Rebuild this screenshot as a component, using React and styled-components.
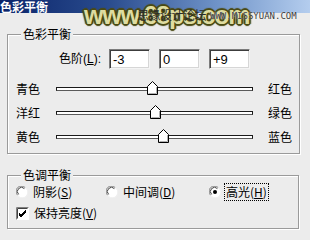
import React from "react";
import styled, { createGlobalStyle } from "styled-components";

const Global = createGlobalStyle`
  html, body { margin: 0; padding: 0; background: #ececec; }
  body { font-family: "Liberation Sans", "Noto Sans CJK SC", sans-serif; font-size: 12px; color: #000; }
`;

const Window = styled.div`
  position: relative;
  width: 310px;
  height: 240px;
  overflow: hidden;
  background: #ececec;
`;

const TitleBar = styled.div`
  height: 13px;
  background: linear-gradient(to right, #0a246a 0%, #2a4c8e 35%, #6f93c8 70%, #b4cdee 100%);
  display: flex;
  align-items: center;
`;

const TitleText = styled.span`
  color: #fff;
  font-weight: bold;
  font-size: 12px;
  line-height: 13px;
  font-family: "Noto Sans CJK SC", sans-serif;
`;

const Watermark = styled.div`
  position: absolute;
  left: 84px;
  top: 0px;
  display: flex;
  align-items: center;
  pointer-events: none;
`;

const WmBig = styled.span`
  font-family: "Liberation Sans", sans-serif;
  font-weight: bold;
  font-size: 25px;
  letter-spacing: -1.2px;
  line-height: 30px;
  color: #dedca0;
  text-shadow: 1px 1px 0 #4a4a14, -1px -1px 0 #4a4a14, 1px -1px 0 #4a4a14, -1px 1px 0 #4a4a14,
    2px 0 1px #4a4a14, -2px 0 1px #4a4a14, 0 2px 1px #4a4a14, 0 -2px 1px #4a4a14;
`;

const WmCn = styled.span`
  position: absolute;
  left: 53px;
  top: 8px;
  font-family: "Noto Sans CJK SC", sans-serif;
  font-size: 12px;
  line-height: 14px;
  color: #2b2b2b;
  letter-spacing: -0.5px;
`;

const WmUrl = styled.span`
  position: absolute;
  left: 126px;
  top: 11px;
  font-family: "DejaVu Sans Mono", monospace;
  font-size: 9px;
  line-height: 10px;
  color: #3a3a3a;
  white-space: nowrap;
  text-shadow: 0 0 1px #fff;
`;

const Body = styled.div`
  padding: 21px 10px 0 7px;
  display: flex;
  flex-direction: column;
  gap: 21px;
`;

const Group = styled.div`
  position: relative;
  box-sizing: border-box;
  width: ${(p) => p.$w}px;
  height: ${(p) => p.$h}px;
  border: 1px solid #9a9a9a;
  box-shadow: inset 1px 1px 0 #fff, 1px 1px 0 #fff;
  padding: ${(p) => p.$pt}px 0 0 8px;
  display: flex;
  flex-direction: column;
`;

const Legend = styled.span`
  position: absolute;
  left: 13px;
  top: -8px;
  padding: 0 2px;
  background: #ececec;
  font-family: "Noto Sans CJK SC", sans-serif;
  font-size: 12px;
  line-height: 14px;
`;

const LevelsRow = styled.div`
  display: flex;
  align-items: center;
  height: 20px;
  gap: 9px;
`;

const LevelsLabel = styled.span`
  width: 85px;
  margin-right: -1px;
  text-align: right;
  line-height: 14px;
`;

const NumBox = styled.div`
  box-sizing: border-box;
  width: 41px;
  height: 20px;
  background: #fff;
  border: 1px solid;
  border-color: #7c7c7c #f4f4f4 #f4f4f4 #7c7c7c;
  box-shadow: inset 1px 1px 0 #3c3c3c, inset -1px -1px 0 #d6d6d6;
  padding: 2px 0 0 3px;
  font-family: "Liberation Sans", sans-serif;
  font-size: 13px;
  line-height: 15px;
`;

const Sliders = styled.div`
  margin-top: 8px;
  display: flex;
  flex-direction: column;
`;

const SliderRow = styled.div`
  display: grid;
  grid-template-columns: 40px 197px 15px auto;
  align-items: center;
  height: 24px;
`;

const SideLabel = styled.span`
  font-family: "Noto Sans CJK SC", sans-serif;
  font-size: 12px;
  line-height: 14px;
  grid-column: ${(p) => p.$col};
`;

const Track = styled.div`
  position: relative;
  height: 14px;
  display: flex;
  align-items: center;
`;

const Groove = styled.div`
  box-sizing: border-box;
  width: 100%;
  height: 4px;
  background: #fff;
  border: 1px solid #1a1a1a;
  border-bottom-color: #5a5a5a;
`;

const ThumbSvg = styled.svg`
  position: absolute;
  top: -1px;
  margin-left: -5px;
`;

const ToneRow = styled.div`
  display: flex;
  align-items: center;
  height: 18px;
  margin-top: ${(p) => p.$mt || 0}px;
`;

const Choice = styled.label`
  display: flex;
  align-items: center;
  gap: 5px;
  width: ${(p) => (p.$w ? `${p.$w}px` : "auto")};
  font-family: "Noto Sans CJK SC", sans-serif;
  font-size: 12px;
  line-height: 14px;
`;

const ChoiceText = styled.span`
  padding: 1px;
  border: 1px dotted ${(p) => (p.$focus ? "#000" : "transparent")};
  margin-left: -2px;
`;

const U = styled.u`
  text-underline-offset: 1px;
`;

function Thumb({ value }) {
  const pct = ((value + 100) / 200) * 100;
  return (
    <ThumbSvg width="12" height="15" viewBox="0 0 12 15" style={{ left: `${pct}%` }}>
      <polygon points="0.5,5.5 5.5,0.5 10.5,5.5 10.5,13.5 0.5,13.5" fill="#fff" stroke="#000" strokeWidth="1" />
      <polyline points="9.5,6 9.5,12.5 1.5,12.5" fill="none" stroke="#b0b0b0" strokeWidth="1" />
    </ThumbSvg>
  );
}

function Radio({ checked }) {
  return (
    <svg width="12" height="12" viewBox="0 0 12 12">
      <circle cx="6" cy="6" r="5.5" fill="#fff" />
      <path d="M1.6 9.2 A5 5 0 0 1 9.2 1.6" fill="none" stroke="#808080" strokeWidth="1" />
      <path d="M2.6 8.4 A4 4 0 0 1 8.4 2.6" fill="none" stroke="#404040" strokeWidth="1" />
      <path d="M10.4 2.8 A5 5 0 0 1 2.8 10.4" fill="none" stroke="#f0f0f0" strokeWidth="1" />
      {checked && <circle cx="6" cy="6" r="2" fill="#000" />}
    </svg>
  );
}

function Check() {
  return (
    <svg width="13" height="13" viewBox="0 0 13 13">
      <rect x="0" y="0" width="13" height="13" fill="#fff" />
      <path d="M0.5 12.5 V0.5 H12.5" fill="none" stroke="#808080" />
      <path d="M1.5 11.5 V1.5 H11.5" fill="none" stroke="#404040" />
      <path d="M3 6 L5 8 L10 3 M3 7 L5 9 L10 4 M3 8 L5 10 L10 5" fill="none" stroke="#000" strokeWidth="1" />
    </svg>
  );
}

const sliders = [
  { l: "青色", r: "红色", v: -3 },
  { l: "洋红", r: "绿色", v: 0 },
  { l: "黄色", r: "蓝色", v: 9 },
];

export default function App() {
  return (
    <Window>
      <Global />
      <TitleBar>
        <TitleText>色彩平衡</TitleText>
      </TitleBar>
      <Watermark>
        <WmBig>www.68ps.com</WmBig>
        <WmCn>思缘设计论坛</WmCn>
        <WmUrl>WWW.MISSYUAN.COM</WmUrl>
      </Watermark>
      <Body>
        <Group $w={293} $h={120} $pt={14}>
          <Legend>色彩平衡</Legend>
          <LevelsRow>
            <LevelsLabel>色阶(<U>L</U>):</LevelsLabel>
            <NumBox>-3</NumBox>
            <NumBox>0</NumBox>
            <NumBox>+9</NumBox>
          </LevelsRow>
          <Sliders>
            {sliders.map((s) => (
              <SliderRow key={s.l}>
                <SideLabel $col={1}>{s.l}</SideLabel>
                <Track>
                  <Groove />
                  <Thumb value={s.v} />
                </Track>
                <SideLabel $col={4}>{s.r}</SideLabel>
              </SliderRow>
            ))}
          </Sliders>
        </Group>
        <Group $w={292} $h={54} $pt={7}>
          <Legend>色调平衡</Legend>
          <ToneRow>
            <Choice $w={90}>
              <Radio />
              <span>阴影(<U>S</U>)</span>
            </Choice>
            <Choice $w={103}>
              <Radio />
              <span>中间调(<U>D</U>)</span>
            </Choice>
            <Choice>
              <Radio checked />
              <ChoiceText $focus>高光(<U>H</U>)</ChoiceText>
            </Choice>
          </ToneRow>
          <ToneRow $mt={3}>
            <Choice>
              <Check />
              <span>保持亮度(<U>V</U>)</span>
            </Choice>
          </ToneRow>
        </Group>
      </Body>
    </Window>
  );
}
